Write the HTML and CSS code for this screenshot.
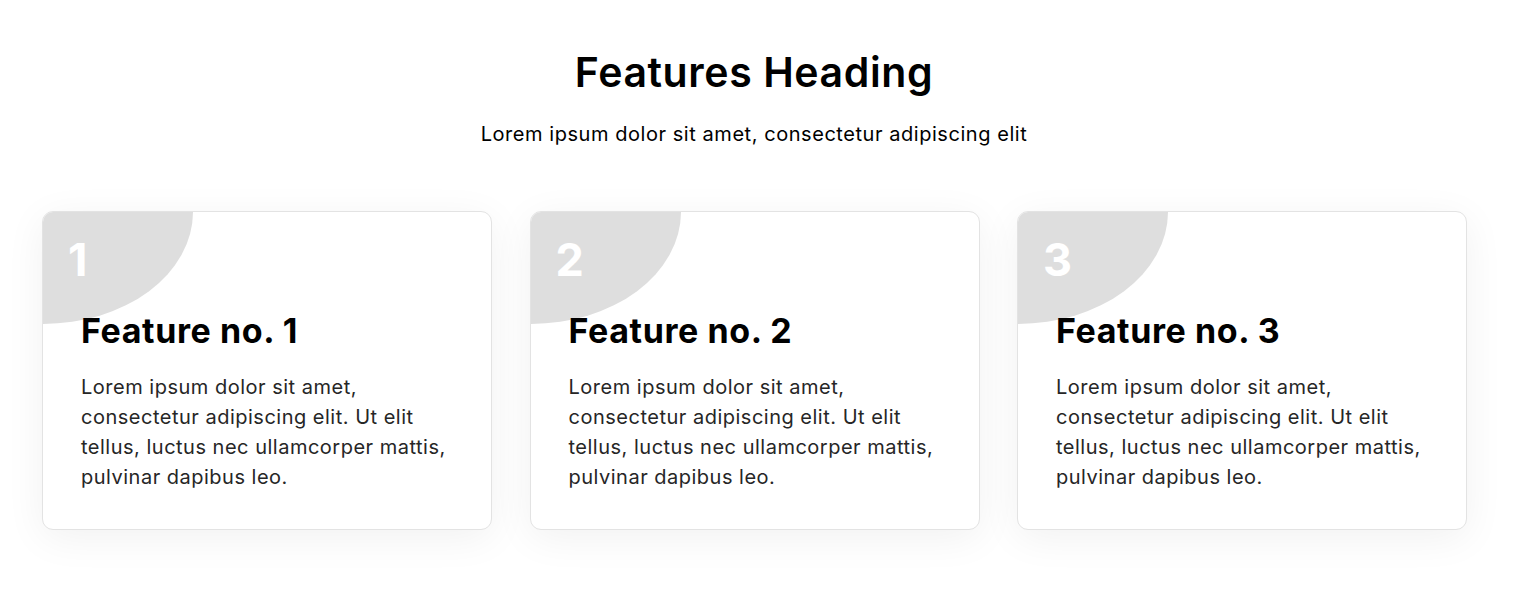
FILE: index.html
```html
<!DOCTYPE html>
<html lang="en">
<head>
<meta charset="utf-8">
<title>Features</title>
<link rel="stylesheet" href="styles.css">
</head>
<body>
<section class="features">
  <header class="features-head">
    <h1 class="features-title">Features Heading</h1>
    <p class="features-lead">Lorem ipsum dolor sit amet, consectetur adipiscing elit</p>
  </header>
  <div class="feature-grid">
    <article class="feature-card">
      <div class="feature-badge"><span class="feature-num">1</span></div>
      <h2 class="feature-name">Feature no. 1</h2>
      <p class="feature-text">Lorem ipsum dolor sit amet, consectetur adipiscing elit. Ut elit tellus, luctus nec ullamcorper mattis, pulvinar dapibus leo.</p>
    </article>
    <article class="feature-card">
      <div class="feature-badge"><span class="feature-num">2</span></div>
      <h2 class="feature-name">Feature no. 2</h2>
      <p class="feature-text">Lorem ipsum dolor sit amet, consectetur adipiscing elit. Ut elit tellus, luctus nec ullamcorper mattis, pulvinar dapibus leo.</p>
    </article>
    <article class="feature-card">
      <div class="feature-badge"><span class="feature-num">3</span></div>
      <h2 class="feature-name">Feature no. 3</h2>
      <p class="feature-text">Lorem ipsum dolor sit amet, consectetur adipiscing elit. Ut elit tellus, luctus nec ullamcorper mattis, pulvinar dapibus leo.</p>
    </article>
  </div>
</section>
</body>
</html>
```

FILE: styles.css
```css
* {
  box-sizing: border-box;
}

html,
body {
  margin: 0;
  background: #ffffff;
}

body {
  font-family: Inter, "Noto Sans", sans-serif;
  color: #000000;
}

.features {
  padding: 48px 48px 60px 42px;
}

.features-head {
  text-align: center;
}

.features-title {
  margin: 0;
  font-size: 41px;
  line-height: 48px;
  font-weight: 600;
  letter-spacing: 0.6px;
}

.features-lead {
  margin: 25px 0 0;
  font-size: 20px;
  line-height: 26px;
  font-weight: 400;
  letter-spacing: 0.55px;
}

.feature-grid {
  display: grid;
  grid-template-columns: repeat(3, 450px);
  column-gap: 37.5px;
  margin-top: 64px;
}

.feature-card {
  position: relative;
  overflow: hidden;
  height: 319px;
  padding: 98px 38px 38px 38px;
  background: #ffffff;
  border: 1px solid #e3e3e3;
  border-radius: 11px;
  box-shadow: 0 8px 40px rgba(0, 0, 0, 0.06);
}

/* quarter-ellipse corner holding the card number */
.feature-badge {
  position: absolute;
  top: 0;
  left: 0;
  width: 150px;
  height: 112px;
  background: #dedede;
  border-bottom-right-radius: 150px 112px;
  padding: 21px 0 0 25px;
}

.feature-num {
  display: block;
  color: #ffffff;
  font-size: 45px;
  line-height: 54px;
  font-weight: 700;
}

.feature-name {
  position: relative;
  margin: 0;
  font-size: 34px;
  line-height: 42px;
  font-weight: 700;
  letter-spacing: 0.6px;
}

.feature-text {
  margin: 20px 0 0;
  font-size: 20px;
  line-height: 30px;
  color: #262626;
  letter-spacing: 0.5px;
}
```
